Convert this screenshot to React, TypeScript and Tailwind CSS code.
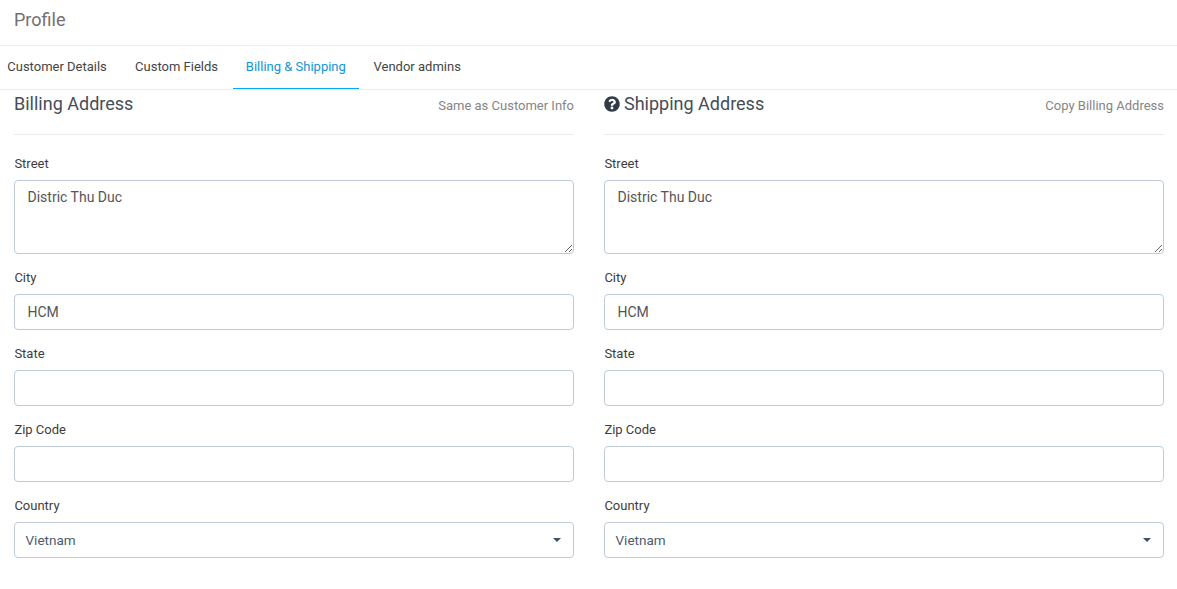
import { FaQuestionCircle } from "react-icons/fa";

const tabs = [
  { label: "Customer Details", className: "pl-[7.25px] pr-[14.25px] text-[#444]" },
  { label: "Custom Fields", className: "pl-[14px] pr-[15px] text-[#444]" },
  { label: "Billing & Shipping", className: "w-[126px] border-b border-[#03a9f4] pl-[12.75px] text-[#0f96d4]" },
  { label: "Vendor admins", className: "px-[14.5px] text-[#444]" },
];

function Label({ children }: { children: string }) {
  return <label className="mb-[6px] block h-5 pl-[0.4px] text-[13px] leading-5 text-[#3d3d3d]">{children}</label>;
}

function TextField({ label, value = "" }: { label: string; value?: string }) {
  return (
    <div className="mb-[14px] h-[62px]">
      <Label>{label}</Label>
      <input
        defaultValue={value}
        className="block h-9 w-full rounded-[4px] border border-[#bfcbd9] bg-white px-[12.5px] text-[14px] text-[#555] outline-none"
      />
    </div>
  );
}

function AddressForm({ title, action, help = false }: { title: string; action: string; help?: boolean }) {
  return (
    <section>
      <div className="flex h-[45px] justify-between border-b border-[#ececec]">
        <h4 className="flex h-7 items-center text-[18px] leading-7 text-[#454d59]">
          {help && <FaQuestionCircle className="mr-1 size-4 text-[#323a45]" />}
          <span>{title}</span>
        </h4>
        <a className="pt-1.5 text-[13px] leading-5 text-[#858585]">{action}</a>
      </div>
      <div className="pt-[19px]">
        <div className="mb-[14px] h-[100px]">
          <Label>Street</Label>
          <textarea
            defaultValue="Distric Thu Duc"
            className="block h-[74px] w-full resize-y rounded-[4px] border border-[#bfcbd9] bg-white px-[12.5px] py-1.5 text-[14px] leading-5 text-[#555] outline-none"
          />
        </div>
        <TextField label="City" value="HCM" />
        <TextField label="State" />
        <TextField label="Zip Code" />
        <div>
          <Label>Country</Label>
          <button className="flex h-9 w-full items-center justify-between rounded-[4px] border border-[#bfcbd9] bg-white pr-3 pl-[10.5px] text-[13.5px] text-[#4d5c6e]">
            Vietnam
            <svg className="h-1 w-2 text-[#415164]" viewBox="0 0 8 4" fill="currentColor"><path d="M0 0h8L4 4z" /></svg>
          </button>
        </div>
      </div>
    </section>
  );
}

export default function App() {
  return (
    <main className="h-[589px] overflow-hidden bg-white font-['Roboto',sans-serif]">
      <header className="h-[46px] border-b border-[#ececec] pl-[14px]">
        <h1 className="pt-[6px] text-[18px] leading-7 text-[#717171]">Profile</h1>
      </header>
      <nav className="flex h-11 border-b border-[#ececec]">
        {tabs.map(({ label, className }) => (
          <a key={label} className={`h-[43px] shrink-0 whitespace-nowrap pt-[11px] text-[13px] leading-5 ${className}`}>
            {label}
          </a>
        ))}
      </nav>
      <div className="grid grid-cols-[560px_560px] gap-[30px] pr-[13px] pl-[14px]">
        <AddressForm title="Billing Address" action="Same as Customer Info" />
        <AddressForm title="Shipping Address" action="Copy Billing Address" help />
      </div>
    </main>
  );
}
